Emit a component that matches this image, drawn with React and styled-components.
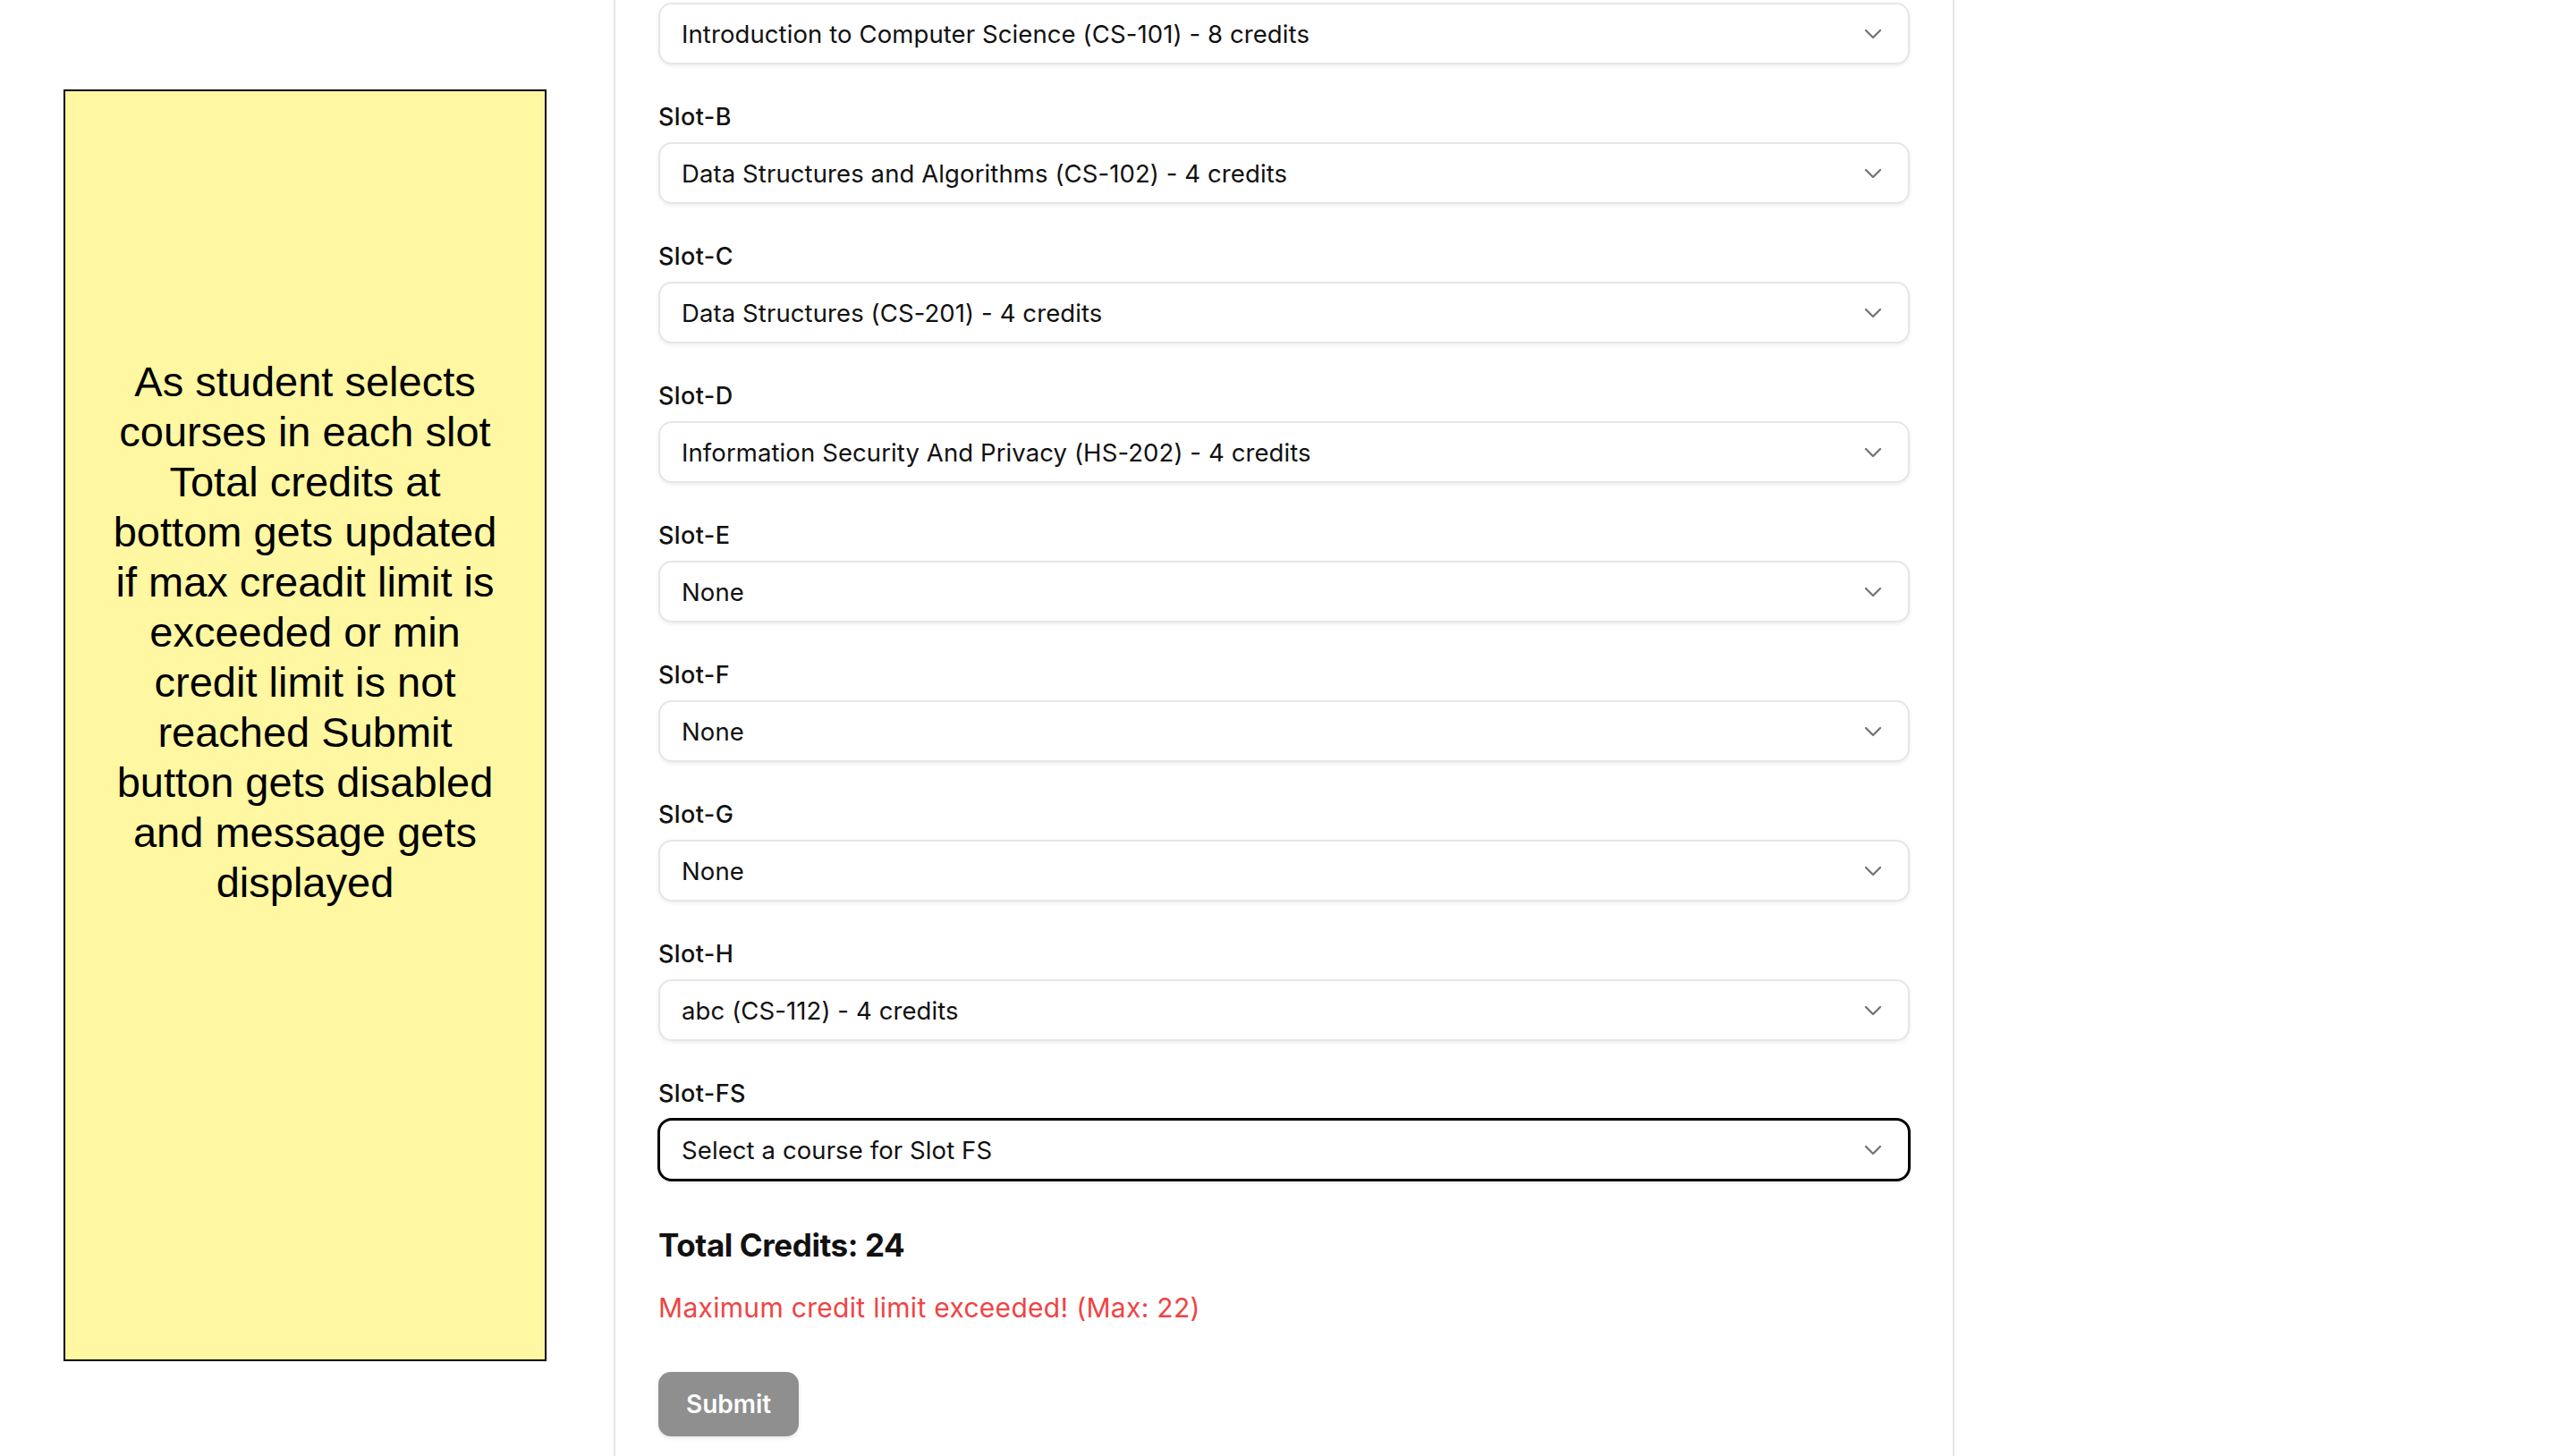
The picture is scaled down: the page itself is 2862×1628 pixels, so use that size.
import React from 'react';
import styled, { createGlobalStyle } from 'styled-components';
import { ChevronDown } from 'lucide-react';

const GlobalStyle = createGlobalStyle`
  html, body {
    margin: 0;
    padding: 0;
    background: #ffffff;
    overflow: hidden;
  }
  body {
    font-family: Inter, "Noto Sans", sans-serif;
    color: #111111;
  }
`;

const slots = [
  { name: 'Slot-A', value: 'Introduction to Computer Science (CS-101) - 8 credits' },
  { name: 'Slot-B', value: 'Data Structures and Algorithms (CS-102) - 4 credits' },
  { name: 'Slot-C', value: 'Data Structures (CS-201) - 4 credits' },
  { name: 'Slot-D', value: 'Information Security And Privacy (HS-202) - 4 credits' },
  { name: 'Slot-E', value: 'None' },
  { name: 'Slot-F', value: 'None' },
  { name: 'Slot-G', value: 'None' },
  { name: 'Slot-H', value: 'abc (CS-112) - 4 credits' },
  { name: 'Slot-FS', value: 'Select a course for Slot FS', focused: true },
];

const noteLines = [
  'As student selects',
  'courses in each slot',
  'Total credits at',
  'bottom gets updated',
  'if max creadit limit is',
  'exceeded or min',
  'credit limit is not',
  'reached Submit',
  'button gets disabled',
  'and message gets',
  'displayed',
];

const App = () => {
  return (
    <>
      <GlobalStyle />
      <Page>
        <Note>
          {noteLines.map((line) => (
            <NoteLine key={line}>{line}</NoteLine>
          ))}
        </Note>

        <Panel>
          <FieldList>
            {slots.map((slot) => (
              <Field key={slot.name}>
                <Label>{slot.name}</Label>
                <SelectBox $focused={slot.focused}>
                  <span>{slot.value}</span>
                  <ChevronDown size={32} strokeWidth={1.8} color="#767676" />
                </SelectBox>
              </Field>
            ))}
          </FieldList>

          <Total>Total Credits: 24</Total>
          <ErrorText>Maximum credit limit exceeded! (Max: 22)</ErrorText>
          <SubmitButton disabled>Submit</SubmitButton>
        </Panel>
      </Page>
    </>
  );
};

const Page = styled.div`
  display: flex;
  align-items: flex-start;
  gap: 75px;
  padding-left: 71px;
  height: 100vh;
  overflow: hidden;
`;

const Note = styled.div`
  box-sizing: border-box;
  flex: 0 0 540px;
  height: 1422px;
  margin-top: 100px;
  padding-top: 297px;
  background: #fff7a1;
  border: 2px solid #000000;
  font-family: 'Liberation Sans', Arial, sans-serif;
  font-size: 47px;
  line-height: 56px;
  color: #000000;
  text-align: center;
`;

const NoteLine = styled.div`
  white-space: nowrap;
`;

const Panel = styled.div`
  box-sizing: border-box;
  flex: 0 0 1499px;
  margin-top: -43px;
  min-height: 1800px;
  padding: 0 48px;
  border-left: 2px solid #e6e6e6;
  border-right: 2px solid #e6e6e6;
`;

const FieldList = styled.div`
  display: flex;
  flex-direction: column;
  gap: 41px;
`;

const Field = styled.div`
  display: flex;
  flex-direction: column;
`;

const Label = styled.label`
  font-size: 27px;
  line-height: 36px;
  font-weight: 500;
  letter-spacing: 0.4px;
  margin-bottom: 10px;
  color: #111111;
`;

const SelectBox = styled.div`
  box-sizing: border-box;
  height: 69px;
  display: flex;
  align-items: center;
  justify-content: space-between;
  padding: 0 23px 0 24px;
  background: #ffffff;
  border: 2px solid ${({ $focused }) => ($focused ? '#000000' : '#e6e6e6')};
  border-radius: 15px;
  box-shadow: ${({ $focused }) =>
    $focused
      ? '0 0 0 1px #000000, 0 2px 4px rgba(0, 0, 0, 0.08)'
      : '0 2px 4px rgba(0, 0, 0, 0.07)'};
  font-size: 27.5px;
  letter-spacing: 0.1px;
  color: #111111;
`;

const Total = styled.h3`
  margin: 47px 0 0;
  font-size: 35px;
  line-height: 51px;
  font-weight: 700;
  letter-spacing: -0.4px;
  color: #111111;
`;

const ErrorText = styled.p`
  margin: 22px 0 0;
  font-size: 30px;
  line-height: 44px;
  letter-spacing: 0.3px;
  color: #ef4444;
`;

const SubmitButton = styled.button`
  margin-top: 50px;
  height: 72px;
  padding: 0 31px;
  border: none;
  border-radius: 14px;
  background: #8f8f8f;
  color: #ffffff;
  font-family: Inter, sans-serif;
  font-size: 28px;
  font-weight: 600;
  box-shadow: 0 2px 4px rgba(0, 0, 0, 0.1);
`;

export default App;
